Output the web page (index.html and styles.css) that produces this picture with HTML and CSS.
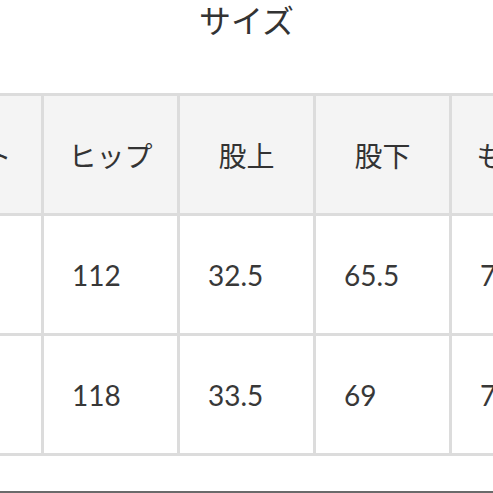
FILE: index.html
```html
<!DOCTYPE html>
<html lang="ja">
<head>
<meta charset="utf-8">
<link rel="stylesheet" href="styles.css">
</head>
<body>
<div class="page">
  <h1 class="title">サイズ</h1>
  <div class="table">
    <div class="cell head">ウエスト</div>
    <div class="cell head">ヒップ</div>
    <div class="cell head">股上</div>
    <div class="cell head">股下</div>
    <div class="cell head">もも幅</div>
    <div class="cell head">裾幅</div>

    <div class="cell num">80</div>
    <div class="cell num">112</div>
    <div class="cell num">32.5</div>
    <div class="cell num">65.5</div>
    <div class="cell num">70</div>
    <div class="cell num">22</div>

    <div class="cell num">86</div>
    <div class="cell num">118</div>
    <div class="cell num">33.5</div>
    <div class="cell num">69</div>
    <div class="cell num">73</div>
    <div class="cell num">23</div>
  </div>
  <div class="rule"></div>
</div>
</body>
</html>
```
FILE: styles.css
```css
html, body {
  margin: 0;
  padding: 0;
  background: #ffffff;
}
body {
  width: 493px;
  height: 493px;
  overflow: hidden;
}
.page {
  width: 493px;
  height: 493px;
  overflow: hidden;
  color: #333333;
}
.title {
  margin: 0;
  height: 38px;
  line-height: 38px;
  font-size: 32px;
  font-weight: 400;
  text-align: center;
  font-family: "Noto Sans CJK JP", "Noto Sans", sans-serif;
  color: #333333;
}
.table {
  display: grid;
  grid-template-columns: 171px 133px 133px 133px 133px 133px;
  grid-auto-rows: 117px;
  gap: 3px;
  padding: 3px;
  background: #dcdcdc;
  width: max-content;
  margin-top: 55px;
  margin-left: -133px;
}
.cell {
  display: flex;
  align-items: center;
  background: #ffffff;
  font-size: 28px;
}
.head {
  justify-content: center;
  background: #f4f4f4;
  font-family: "Noto Sans CJK JP", "Noto Sans", sans-serif;
}
.num {
  justify-content: flex-start;
  padding-left: 28px;
  font-family: Lato, "Noto Sans", sans-serif;
  color: #383838;
}
.rule {
  margin-top: 35px;
  height: 2px;
  background: #6a6a6a;
}
```
